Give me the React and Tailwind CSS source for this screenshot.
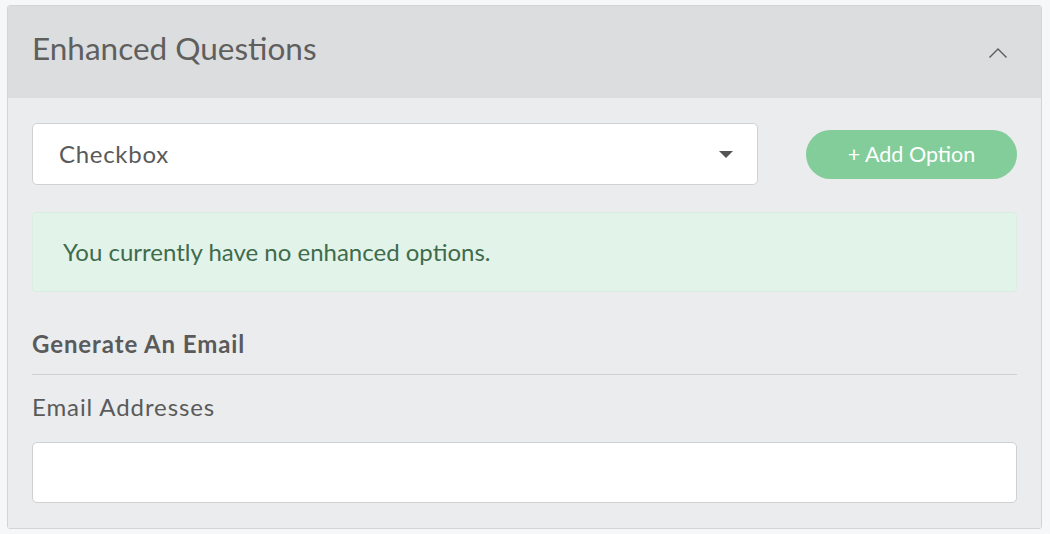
export default function App() {
  return (
    <div className="min-h-screen bg-[#f6f7f9] pt-[5px] pl-[7px] pr-[8px] font-['Lato',sans-serif]">
      <div className="w-[1035px] border border-[#d3d4d6] rounded-[3px] overflow-hidden">
        {/* Header */}
        <div className="h-[92px] bg-[#dcdddf] flex items-center justify-between pl-[24px] pr-[34px]">
          <h1 className="mb-[6px] text-[31.5px] text-[#5f5f5e] font-normal">Enhanced Questions</h1>
          <svg width="18" height="10" viewBox="0 0 18 10" fill="none" className="mt-[1px]">
            <polyline points="0.5,9.5 9,1 17.5,9.5" stroke="#5a5a5a" strokeWidth="1.4" />
          </svg>
        </div>

        {/* Body */}
        <div className="bg-[#ebecee] px-[24px] pt-[25px] pb-[25px]">
          <div className="flex items-center justify-between">
            <div className="w-[726px] h-[62px] bg-white border border-[#d0d1d3] rounded-[5px] flex items-center justify-between pl-[26px] pr-[24px]">
              <span className="text-[24px] tracking-[0.7px] text-[#5a5a5a]">Checkbox</span>
              <span className="w-0 h-0 border-l-[7px] border-r-[7px] border-t-[7px] border-l-transparent border-r-transparent border-t-[#555]" />
            </div>
            <button className="w-[211px] h-[49px] rounded-full bg-[#82cd9a] text-white text-[21.5px]">
              + Add Option
            </button>
          </div>

          <div className="mt-[27px] h-[80px] bg-[#e2f3ea] border border-[#d8eee1] rounded-[4px] flex items-center pl-[30px]">
            <span className="text-[24px] text-[#3f6b4c]">You currently have no enhanced options.</span>
          </div>

          <h2 className="mt-[40px] text-[24px] tracking-[0.9px] font-bold text-[#5a5a5a] leading-none">Generate An Email</h2>
          <div className="mt-[18px] border-t border-[#cfd0d2]" />

          <label className="block mt-[20px] text-[24px] tracking-[0.9px] text-[#5a5a5a] leading-none">Email Addresses</label>
          <input
            type="text"
            className="block mt-[23px] w-full h-[61px] bg-white border border-[#cfd0d2] rounded-[5px] px-4 text-[22px] outline-none"
          />
        </div>
      </div>
    </div>
  )
}
